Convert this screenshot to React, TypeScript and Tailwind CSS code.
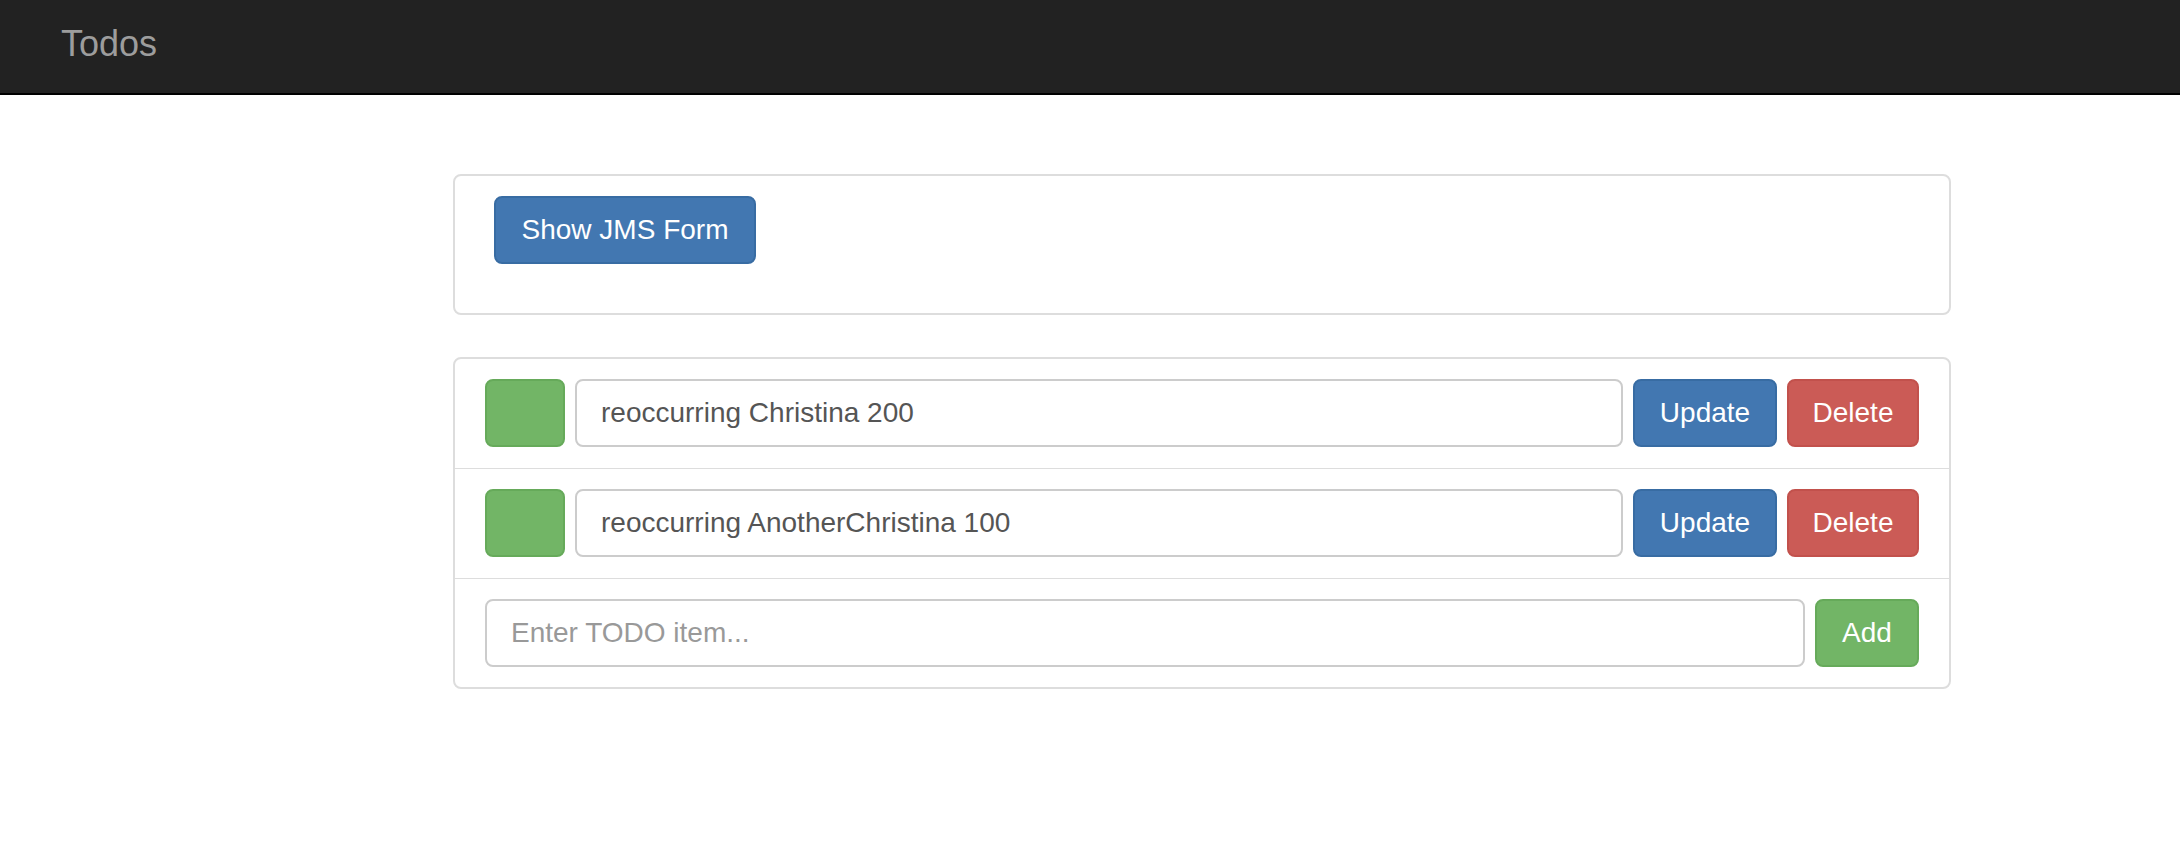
import React from 'react'

const font = { fontFamily: '"Liberation Sans", Arial, sans-serif' }

const todos = [
  { id: 1, text: 'reoccurring Christina 200' },
  { id: 2, text: 'reoccurring AnotherChristina 100' },
]

function TodoRow({ text }: { text: string }) {
  return (
    <div className="flex items-center gap-[10px] border-b border-[#dddddd] px-[30px] pt-[20px] pb-[21px]">
      <div className="h-[68px] w-[80px] shrink-0 rounded-[8px] border-2 border-[#66aa5a] bg-[#72b566]" />
      <input
        defaultValue={text}
        className="h-[68px] flex-1 rounded-[8px] border-2 border-[#cccccc] bg-white px-[24px] text-[28px] text-[#555555] outline-none"
      />
      <button className="h-[68px] w-[144px] shrink-0 rounded-[8px] border-2 border-[#386ca3] bg-[#4277b1] text-[28px] text-white">
        Update
      </button>
      <button className="h-[68px] w-[132px] shrink-0 rounded-[8px] border-2 border-[#c2514c] bg-[#cb5b56] text-[28px] text-white">
        Delete
      </button>
    </div>
  )
}

export default function App() {
  return (
    <div className="min-h-[856px] bg-white" style={font}>
      <nav className="flex h-[95px] items-center border-b-2 border-black bg-[#222222] pb-[6px] pl-[61px]">
        <span className="text-[36px] text-[#9d9d9d]">Todos</span>
      </nav>

      <div className="ml-[453px] w-[1498px] pt-[79px]">
        <div className="h-[141px] rounded-[8px] border-2 border-[#dddddd] pl-[39px] pt-[20px]">
          <button className="h-[68px] w-[262px] rounded-[8px] border-2 border-[#386ca3] bg-[#4277b1] text-[28px] text-white">
            Show JMS Form
          </button>
        </div>

        <div className="mt-[42px] rounded-[8px] border-2 border-[#dddddd]">
          {todos.map(t => (
            <TodoRow key={t.id} text={t.text} />
          ))}
          <div className="flex items-center gap-[10px] px-[30px] pt-[20px] pb-[20px]">
            <input
              placeholder="Enter TODO item..."
              className="h-[68px] flex-1 rounded-[8px] border-2 border-[#cccccc] bg-white px-[24px] text-[28px] text-[#555555] outline-none placeholder:text-[#999999]"
            />
            <button className="h-[68px] w-[104px] shrink-0 rounded-[8px] border-2 border-[#66aa5a] bg-[#72b566] text-[28px] text-white">
              Add
            </button>
          </div>
        </div>
      </div>
    </div>
  )
}
